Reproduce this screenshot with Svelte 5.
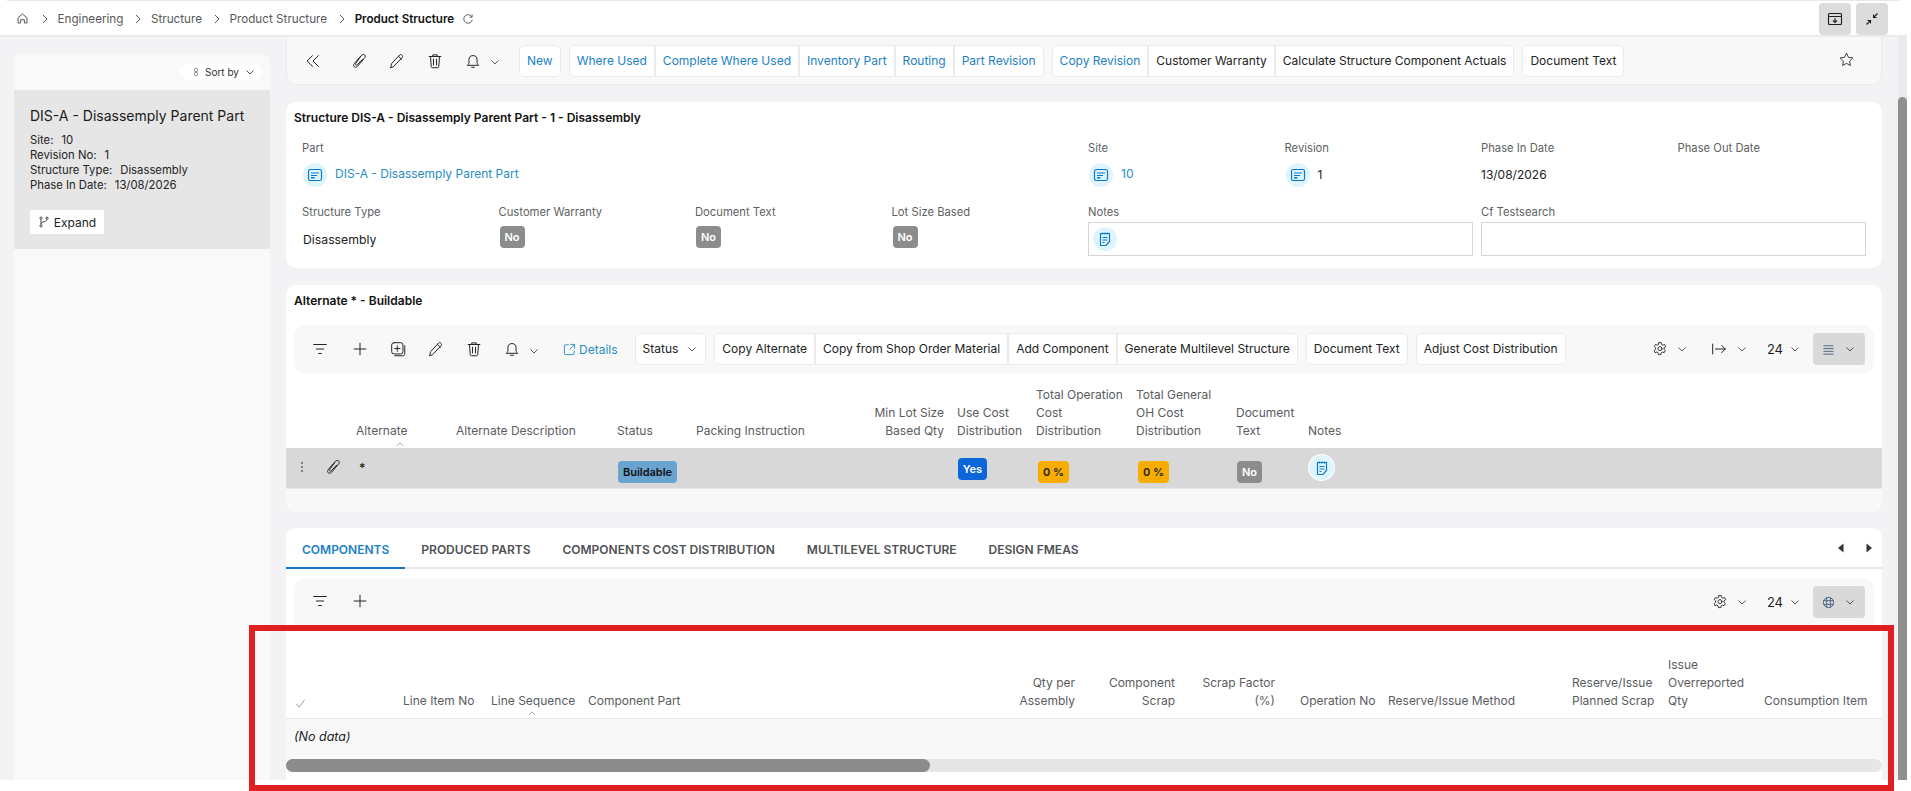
<script>
	const crumbs = ['Engineering', 'Structure', 'Product Structure'];
	const summary = [
		['Site:', '10'],
		['Revision No:', '1'],
		['Structure Type:', 'Disassembly'],
		['Phase In Date:', '13/08/2026']
	];
	const tabs = ['COMPONENTS', 'PRODUCED PARTS', 'COMPONENTS COST DISTRIBUTION', 'MULTILEVEL STRUCTURE', 'DESIGN FMEAS'];
	const altCols = [
		{ lines: [] },
		{ lines: ['Alternate'], sorted: true },
		{ lines: ['Alternate Description'] },
		{ lines: ['Status'] },
		{ lines: ['Packing Instruction'] },
		{ lines: ['Min Lot Size', 'Based Qty'], right: true },
		{ lines: ['Use Cost', 'Distribution'] },
		{ lines: ['Total Operation', 'Cost', 'Distribution'] },
		{ lines: ['Total General', 'OH Cost', 'Distribution'] },
		{ lines: ['Document', 'Text'] },
		{ lines: ['Notes'] }
	];
	const compCols = [
		{ lines: [], check: true },
		{ lines: ['Line Item No'] },
		{ lines: ['Line Sequence'], sorted: true },
		{ lines: ['Component Part'] },
		{ lines: ['Qty per', 'Assembly'], right: true },
		{ lines: ['Component', 'Scrap'], right: true },
		{ lines: ['Scrap Factor', '(%)'], right: true },
		{ lines: ['Operation No'], far: true },
		{ lines: ['Reserve/Issue Method'] },
		{ lines: ['Reserve/Issue', 'Planned Scrap'] },
		{ lines: ['Issue', 'Overreported', 'Qty'] },
		{ lines: ['Consumption Item'] }
	];
</script>

{#snippet chev()}
	<svg class="chev" viewBox="0 0 12 12"><path d="M2.5 4.5 6 8l3.5-3.5" /></svg>
{/snippet}
{#snippet clip()}
	<svg class="ic" viewBox="0 0 20 20"><path d="M12 4.500 5 12.500c-1.400 1.600-1.200 3.200-.2 4s2.500.6 3.700-.8L16 7c1.200-1.500 1.200-3 .2-3.800s-2.500-.6-3.500.6L6.500 12.500c-.6.8-.5 1.500 0 1.900s1.200.3 1.800-.4L14 8" /></svg>
{/snippet}
{#snippet pencil()}
	<svg class="ic" viewBox="0 0 20 20"><path d="M3 17.200l.9-4.200 9-9.600c.7-.7 1.700-.7 2.300-.1l.6.6c.6.6.6 1.600-.1 2.300l-9 9.600zM11.600 4.800l3.300 3.200" /></svg>
{/snippet}
{#snippet trash()}
	<svg class="ic" viewBox="0 0 20 20"><path d="M3.500 5h13M7.500 5V3.200h5V5M5 5l.8 11.200c.1.900.7 1.300 1.400 1.300h5.600c.7 0 1.300-.4 1.400-1.300L15 5M8.300 8v6.500M11.700 8v6.500" /></svg>
{/snippet}
{#snippet bell()}
	<svg class="ic" viewBox="0 0 20 20"><path d="M4 14.500c1-1 1.500-1.800 1.500-3.500V8.500a4.500 4.500 0 0 1 9 0V11c0 1.700.5 2.500 1.500 3.500zM8.500 17h3" /></svg>
{/snippet}
{#snippet filter()}
	<svg class="ic" viewBox="0 0 20 20"><path d="M3 5h14M6 10h8M8.500 15h3" /></svg>
{/snippet}
{#snippet plus()}
	<svg class="ic" viewBox="0 0 20 20"><path d="M10 3.500v13M3.500 10h13" /></svg>
{/snippet}
{#snippet gear()}
	<svg class="ic" viewBox="0 0 20 20"><path d="M8.500 2h3l.4 2.200 1.700 1 2.100-.8 1.500 2.600L15 8.500v2l1.700 1.500-1.500 2.600-2.100-.8-1.700 1-.4 2.200h-3l-.4-2.200-1.700-1-2.100.8L2.800 12 4.500 10.500v-2L2.800 7l1.500-2.600 2.100.8 1.700-1z" /><circle cx="10" cy="9.500" r="2.500" /></svg>
{/snippet}
{#snippet lookup()}
	<span class="bubble">
		<svg viewBox="0 0 16 16"><rect x="1.500" y="2.500" width="13" height="11" rx="1.800" /><path d="M4 6h8M4 8.500h6" /><rect class="solid" x="4" y="10" width="3.500" height="1.500" /></svg>
	</span>
{/snippet}
{#snippet notes()}
	<span class="bubble">
		<svg viewBox="0 0 16 16"><path d="M3.500 2.500h9v8l-3.500 4h-5.500zM5.500 1.500v2M8 1.500v2M10.500 1.500v2M5.500 6.500h5M5.500 9h5M5.500 11.500h2" /></svg>
	</span>
{/snippet}
{#snippet no()}
	<span class="badge grey">No</span>
{/snippet}

<div class="page">
	<div class="frame">
		<header class="top">
			<svg class="home" viewBox="0 0 16 16"><path d="M2.500 7 8 2.500 13.500 7v6.500h-3.200V9.500H5.700v4H2.500z" /></svg>
			{#each crumbs as c}
				<svg class="sep" viewBox="0 0 8 10"><path d="M2 1l4 4-4 4" /></svg>
				<span class="crumb">{c}</span>
			{/each}
			<svg class="sep" viewBox="0 0 8 10"><path d="M2 1l4 4-4 4" /></svg>
			<strong class="crumb current">Product Structure</strong>
			<svg class="refresh" viewBox="0 0 14 14"><path d="M11.500 4.500A5 5 0 1 0 12 8M11.800 1.800v3h-3" /></svg>
			<div class="top-actions">
				<button class="top-btn" aria-label="Save view">
					<svg viewBox="0 0 16 16"><rect x="1.500" y="2.500" width="13" height="11" rx="1" /><path d="M1.500 5.500h13M8 7v4M6 9.500l2 2 2-2" /></svg>
				</button>
				<button class="top-btn" aria-label="Collapse">
					<svg viewBox="0 0 16 16"><path d="M2.500 13.500 6.500 9.500M3.500 9.500h3v3M13.500 2.500l-4 4M12.500 6.500h-3v-3" /></svg>
				</button>
			</div>
		</header>

		<div class="body">
			<aside class="side">
				<div class="side-top">
					<span class="sort">
						<svg viewBox="0 0 10 14"><circle cx="5" cy="4.500" r="2.200" /><circle cx="5" cy="9.500" r="2.200" /></svg>
						Sort by
						{@render chev()}
					</span>
				</div>
				<div class="side-item">
					<h2>DIS-A - Disassemply Parent Part</h2>
					<dl>
						{#each summary as [k, v]}
							<div><dt>{k}</dt><dd>{v}</dd></div>
						{/each}
					</dl>
					<button class="expand">
						<svg viewBox="0 0 14 14"><circle cx="3.500" cy="2.500" r="1.300" /><circle cx="10.500" cy="2.500" r="1.300" /><circle cx="3.500" cy="11.500" r="1.300" /><path d="M3.500 4v6M10.500 4c0 3-7 2.500-7 5" /></svg>
						Expand
					</button>
				</div>
			</aside>

			<main class="main">
				<div class="bar top-bar">
					<span class="icon first">
						<svg class="ic" viewBox="0 0 20 20"><path d="M9.500 4l-6 6 6 6M16 4l-6 6 6 6" /></svg>
					</span>
					<span class="icon gap8">{@render clip()}</span>
					<span class="icon">{@render pencil()}</span>
					<span class="icon">{@render trash()}</span>
					<span class="icon">{@render bell()}</span>
					<span class="bell-chev">{@render chev()}</span>
					<div class="group new"><button class="link">New</button></div>
					<div class="group">
						<button class="link">Where Used</button>
						<button class="link">Complete Where Used</button>
						<button class="link">Inventory Part</button>
						<button class="link">Routing</button>
						<button class="link">Part Revision</button>
					</div>
					<div class="group">
						<button class="link">Copy Revision</button>
						<button>Customer Warranty</button>
						<button>Calculate Structure Component Actuals</button>
					</div>
					<div class="group"><button>Document Text</button></div>
					<svg class="star" viewBox="0 0 20 20"><path d="M10 2.500l2.300 4.900 5.200.7-3.800 3.700.9 5.300L10 14.500l-4.600 2.600.9-5.300L2.500 8.100l5.200-.7z" /></svg>
				</div>

				<section class="card form">
					<h3>Structure DIS-A - Disassemply Parent Part - 1 - Disassembly</h3>
					<div class="fields">
						<div class="field span4">
							<span class="label">Part</span>
							<span class="value top-row">{@render lookup()}<a href="#part">DIS-A - Disassemply Parent Part</a></span>
						</div>
						<div class="field">
							<span class="label">Site</span>
							<span class="value top-row">{@render lookup()}<a href="#site">10</a></span>
						</div>
						<div class="field">
							<span class="label">Revision</span>
							<span class="value top-row">{@render lookup()}<span>1</span></span>
						</div>
						<div class="field">
							<span class="label">Phase In Date</span>
							<span class="value top-row">13/08/2026</span>
						</div>
						<div class="field">
							<span class="label">Phase Out Date</span>
						</div>
						<div class="field">
							<span class="label">Structure Type</span>
							<span class="value low plain">Disassembly</span>
						</div>
						<div class="field">
							<span class="label">Customer Warranty</span>
							<span class="value low">{@render no()}</span>
						</div>
						<div class="field">
							<span class="label">Document Text</span>
							<span class="value low">{@render no()}</span>
						</div>
						<div class="field">
							<span class="label">Lot Size Based</span>
							<span class="value low">{@render no()}</span>
						</div>
						<div class="field span2">
							<span class="label">Notes</span>
							<span class="box">{@render notes()}</span>
						</div>
						<div class="field span2">
							<span class="label">Cf Testsearch</span>
							<span class="box"></span>
						</div>
					</div>
				</section>

				<section class="card alt">
					<h3>Alternate * - Buildable</h3>
					<div class="bar list-bar">
						<span class="icon">{@render filter()}</span>
						<span class="icon after-filter">{@render plus()}</span>
						<span class="icon">
							<svg class="ic" viewBox="0 0 20 20"><rect x="3" y="3" width="12.500" height="12.500" rx="2.500" /><path d="M9.200 6.500v6M6.200 9.500h6M17.500 6.500v9c0 1.300-.8 2-2 2H6.500" /></svg>
						</span>
						<span class="icon">{@render pencil()}</span>
						<span class="icon">{@render trash()}</span>
						<span class="icon">{@render bell()}</span>
						<span class="bell-chev">{@render chev()}</span>
						<a class="details" href="#details">
							<svg viewBox="0 0 14 14"><path d="M6 2H2.500C1.800 2 1.500 2.400 1.500 3v8.500c0 .6.300 1 1 1H11c.7 0 1-.4 1-1V8M8 1.500h4.500V6M12.500 1.500 7 7" /></svg>
							Details
						</a>
						<div class="group status"><button>Status {@render chev()}</button></div>
						<div class="group">
							<button>Copy Alternate</button>
							<button>Copy from Shop Order Material</button>
							<button>Add Component</button>
							<button>Generate Multilevel Structure</button>
						</div>
						<div class="group"><button>Document Text</button></div>
						<div class="group"><button>Adjust Cost Distribution</button></div>
						<div class="tools">
							<span class="tool wide">{@render gear()}{@render chev()}</span>
							<span class="tool arrow">
								<svg class="ic" viewBox="0 0 20 20"><path d="M3 4.500v11M6 10h11M13 6l4 4-4 4" /></svg>
								{@render chev()}
							</span>
							<span class="tool count">24{@render chev()}</span>
							<span class="view">
								<svg viewBox="0 0 14 14"><path d="M1.500 3h11M1.500 6h11M1.500 9h11M1.500 12h11" /></svg>
								{@render chev()}
							</span>
						</div>
					</div>

					<div class="thead alt-grid">
						{#each altCols as col}
							<div class="th" class:right={col.right}>
								{#each col.lines as line}<span>{line}</span>{/each}
								{#if col.sorted}<svg class="caret alt-caret" viewBox="0 0 10 6"><path d="M1 5l4-4 4 4" /></svg>{/if}
							</div>
						{/each}
					</div>
					<div class="row alt-grid">
						<div class="lead">
							<svg class="dots" viewBox="0 0 4 12"><circle cx="2" cy="2" r="1" /><circle cx="2" cy="6" r="1" /><circle cx="2" cy="10" r="1" /></svg>
							{@render clip()}
						</div>
						<div class="td"><span class="star-val">*</span></div>
						<div class="td"></div>
						<div class="td"><span class="badge blue">Buildable</span></div>
						<div class="td"></div>
						<div class="td"></div>
						<div class="td"><span class="badge yes">Yes</span></div>
						<div class="td"><span class="badge amber">0 %</span></div>
						<div class="td"><span class="badge amber">0 %</span></div>
						<div class="td"><span class="badge grey">No</span></div>
						<div class="td">{@render notes()}</div>
					</div>
					<div class="tfoot"></div>
				</section>

				<section class="card comps">
					<nav class="tabs">
						{#each tabs as tab, i}
							<span class="tab" class:active={i === 0}>{tab}</span>
						{/each}
						<span class="arrows">
							<svg viewBox="0 0 8 10"><path d="M6.500 0.500v9L1 5z" /></svg>
							<svg viewBox="0 0 8 10"><path d="M1.500 0.500v9L7 5z" /></svg>
						</span>
					</nav>
					<div class="bar list-bar comp-bar">
						<span class="icon">{@render filter()}</span>
						<span class="icon after-filter">{@render plus()}</span>
						<div class="tools">
							<span class="tool">{@render gear()}{@render chev()}</span>
							<span class="tool count">24{@render chev()}</span>
							<span class="view">
								<svg viewBox="0 0 14 14"><circle cx="7" cy="7" r="5.500" /><path d="M1.500 5h11M1.500 9h11M5 1.500v11M9 1.500v11" /></svg>
								{@render chev()}
							</span>
						</div>
					</div>
					<div class="thead comp-grid">
						{#each compCols as col}
							<div class="th" class:right={col.right} class:far={col.far}>
								{#if col.check}
									<svg class="check" viewBox="0 0 12 12"><path d="M1.500 6.500 4.500 10 10.500 2" /></svg>
								{/if}
								{#each col.lines as line}<span>{line}</span>{/each}
								{#if col.sorted}<svg class="caret comp-caret" viewBox="0 0 10 6"><path d="M1 5l4-4 4 4" /></svg>{/if}
							</div>
						{/each}
					</div>
					<div class="empty">(No data)</div>
					<div class="hscroll"><div class="hthumb"></div></div>
				</section>
			</main>

			<div class="vscroll"><div class="vthumb"></div></div>
		</div>
	</div>
	<div class="callout"></div>
</div>

<style>
	:global(body) {
		margin: 0;
		background: #fff;
	}
	.page {
		position: relative;
		width: 1911px;
		height: 791px;
		overflow: hidden;
		font-family: Inter, 'Noto Sans', sans-serif;
		font-size: 12px;
		color: #1f1f22;
	}
	.frame {
		width: 1907px;
		height: 780px;
		display: flex;
		flex-direction: column;
		overflow: hidden;
		background: #f3f3f5;
		border-radius: 10px 10px 0 0;
	}
	.top {
		flex: none;
		height: 37px;
		box-sizing: border-box;
		display: flex;
		align-items: center;
		background: #fff;
		border-top: 1px solid #e8e8ea;
		border-bottom: 2px solid #ebebed;
		padding: 1px 0 0 16px;
	}
	.home {
		width: 13px;
		height: 13px;
		margin-right: 1px;
		fill: none;
		stroke: #444;
		stroke-width: 1.1;
	}
	.sep {
		width: 8px;
		height: 10px;
		margin: 0 9px 0 10.500px;
		fill: none;
		stroke: #555;
		stroke-width: 1;
	}
	.crumb {
		color: #58595c;
		font-size: 11.700px;
	}
	.current {
		color: #111;
		font-weight: 600;
		font-size: 11.600px;
	}
	.refresh {
		width: 12px;
		height: 12px;
		margin-left: 8px;
		fill: none;
		stroke: #555;
		stroke-width: 1.1;
	}
	.top-actions {
		margin-left: auto;
		margin-right: 19px;
		display: flex;
		gap: 5px;
	}
	.top-btn {
		width: 32px;
		height: 32px;
		padding: 0;
		border: 0;
		border-radius: 4px;
		background: #dcdcdd;
		display: flex;
		align-items: center;
		justify-content: center;
	}
	.top-btn svg {
		width: 16px;
		height: 16px;
		fill: none;
		stroke: #1c1c1c;
		stroke-width: 1.1;
	}
	.body {
		flex: 1;
		min-height: 0;
		display: flex;
	}
	.side {
		flex: none;
		width: 256px;
		margin: 17px 16px 0 14px;
		background: #f9f9f9;
		border-radius: 8px 8px 0 0;
		overflow: hidden;
	}
	.side-top {
		height: 36px;
		box-sizing: border-box;
		padding: 10px 9px 0 0;
		display: flex;
		justify-content: flex-end;
	}
	.sort {
		width: 81px;
		height: 16px;
		box-sizing: border-box;
		border-radius: 8px;
		background: #fff;
		padding-left: 7px;
		display: flex;
		align-items: center;
		justify-content: center;
		gap: 5px;
		font-size: 10px;
		color: #333;
	}
	.sort svg:first-child {
		width: 8px;
		height: 12px;
		fill: none;
		stroke: #666;
		stroke-width: 0.9;
	}
	.side-item {
		height: 159px;
		box-sizing: border-box;
		background: #e6e6e6;
		padding: 17px 16px 0;
	}
	h2 {
		margin: 0 0 8px;
		font-size: 14px;
		line-height: 18px;
		font-weight: 400;
		color: #1a1a1a;
		white-space: nowrap;
	}
	dl {
		margin: 0;
		font-size: 11.300px;
		line-height: 15px;
		color: #222;
	}
	dl div {
		display: flex;
		gap: 8px;
	}
	dd {
		margin: 0;
	}
	.expand {
		margin-top: 17px;
		width: 74px;
		height: 24px;
		padding: 0;
		border: 0;
		background: #fff;
		display: flex;
		align-items: center;
		justify-content: center;
		gap: 4px;
		font: 12px Inter, sans-serif;
		color: #222;
	}
	.expand svg {
		width: 12px;
		height: 12px;
		fill: none;
		stroke: #333;
		stroke-width: 1;
	}
	.main {
		flex: none;
		width: 1596px;
		min-height: 0;
		display: flex;
		flex-direction: column;
		gap: 17px;
	}
	.bar {
		display: flex;
		align-items: center;
		background: #f8f8f9;
	}
	.top-bar {
		flex: none;
		height: 48px;
		box-sizing: border-box;
		border: 1px solid #ebebed;
		border-top: 0;
		border-radius: 0 0 10px 10px;
		padding-left: 7px;
	}
	.icon {
		flex: none;
		width: 38px;
		height: 30px;
		display: flex;
		align-items: center;
		justify-content: center;
	}
	.gap8 {
		margin-left: 8px;
	}
	.after-filter {
		margin-left: 2px;
	}
	.ic {
		width: 18px;
		height: 18px;
		fill: none;
		stroke: #222;
		stroke-width: 1.1;
		stroke-linecap: round;
		stroke-linejoin: round;
	}
	.chev {
		width: 12px;
		height: 12px;
		fill: none;
		stroke: #444;
		stroke-width: 0.9;
	}
	.bell-chev {
		display: flex;
		margin-left: -3px;
		margin-top: 3px;
	}
	.group {
		display: flex;
		flex: none;
		height: 32px;
		box-sizing: border-box;
		margin-left: 8px;
		background: #fff;
		border: 1px solid #ebebed;
		border-radius: 5px;
	}
	.group button {
		border: 0;
		border-left: 2px solid #ebebed;
		background: none;
		padding: 0 7px;
		font: 12px Inter, sans-serif;
		color: #222;
		white-space: nowrap;
	}
	.group button:first-child {
		border-left: 0;
	}
	.group .link {
		color: #1d7fc5;
	}
	.new {
		margin-left: 18px;
	}
	.star {
		width: 17px;
		height: 17px;
		margin-left: auto;
		margin-right: 26px;
		margin-top: -3px;
		fill: none;
		stroke: #333;
		stroke-width: 1.1;
	}
	.card {
		flex: none;
		background: #fff;
		border-radius: 10px;
		overflow: hidden;
	}
	h3 {
		margin: 0;
		font-size: 12px;
		line-height: 16px;
		font-weight: 600;
		color: #111;
	}
	.form {
		height: 166px;
		box-sizing: border-box;
		padding: 8px 16px 0 8px;
	}
	.fields {
		margin: 15px 0 0 8px;
		display: grid;
		grid-template-columns: repeat(8, 1fr);
		column-gap: 8px;
		row-gap: 19px;
	}
	.span4 {
		grid-column: span 4;
	}
	.span2 {
		grid-column: span 2;
	}
	.field {
		display: flex;
		flex-direction: column;
		min-width: 0;
	}
	.label {
		font-size: 11.250px;
		line-height: 14px;
		color: #5e5f62;
	}
	.value {
		margin-top: 8px;
		height: 24px;
		display: flex;
		align-items: center;
		gap: 8px;
		font-size: 12px;
		color: #222;
	}
	.value.top-row {
		height: 23px;
	}
	.value.low {
		margin-top: 7px;
		height: 22px;
	}
	.plain {
		padding: 2px 0 0 1px;
		font-size: 12.250px;
	}
	.value a {
		color: #2a8dbf;
		text-decoration: none;
		margin-top: -2px;
	}
	.box {
		margin-top: 3px;
		height: 34px;
		box-sizing: border-box;
		border: 1px solid #d5d5d7;
		display: flex;
		align-items: center;
		padding-left: 3px;
	}
	.bubble {
		flex: none;
		width: 24px;
		height: 24px;
		margin-left: 1px;
		border-radius: 50%;
		background: #dff5fd;
		display: flex;
		align-items: center;
		justify-content: center;
	}
	.bubble svg {
		width: 16px;
		height: 16px;
		fill: none;
		stroke: #0b78cf;
		stroke-width: 1.2;
	}
	.bubble .solid {
		fill: #0b78cf;
		stroke: none;
	}
	.badge {
		display: inline-flex;
		align-items: center;
		justify-content: center;
		height: 22px;
		box-sizing: border-box;
		border-radius: 4px;
		font-size: 11px;
		font-weight: 600;
	}
	.grey {
		width: 25px;
		background: #8c8c8c;
		color: #fff;
		margin-left: 1px;
	}
	.blue {
		width: 59px;
		background: #69a3cf;
		color: #111;
		margin-left: 1px;
	}
	.yes {
		width: 29px;
		background: #0b66d9;
		color: #fff;
		margin: 2px 0 0 1px;
	}
	.amber {
		width: 31px;
		background: #f6ac00;
		color: #222;
		margin-left: 2px;
	}
	.td .blue,
	.td .amber,
	.td .grey {
		margin-top: 7px;
	}
	.alt {
		height: 227px;
	}
	.alt h3 {
		padding: 8px 8px 0;
	}
	.list-bar {
		height: 48px;
		margin: 16px 8px 0;
		padding-left: 7px;
		border-radius: 10px;
	}
	.list-bar .group {
		margin-left: 8px;
	}
	.list-bar .group button {
		padding-bottom: 1px;
	}
	.details {
		margin-left: 23px;
		display: flex;
		align-items: center;
		gap: 3px;
		color: #2a8dbf;
		text-decoration: none;
		font-size: 12px;
	}
	.details svg {
		width: 13px;
		height: 13px;
		fill: none;
		stroke: #2a8dbf;
		stroke-width: 1;
	}
	.list-bar .status {
		margin-left: 17px;
	}
	.status button {
		display: flex;
		align-items: center;
		gap: 8px;
	}
	.tools {
		margin-left: auto;
		margin-right: 9px;
		display: flex;
		align-items: center;
	}
	.tool {
		display: flex;
		align-items: center;
		gap: 8px;
		margin-right: 19px;
		font-size: 13px;
	}
	.tool .ic {
		width: 16px;
		height: 16px;
	}
	.tool.arrow .ic {
		width: 18px;
		height: 18px;
	}
	.wide {
		margin-right: 22px;
	}
	.count {
		gap: 6px;
		margin-right: 12px;
	}
	.view {
		width: 52px;
		height: 32px;
		border-radius: 4px;
		background: #d9d9da;
		display: flex;
		align-items: center;
		justify-content: center;
		gap: 9px;
	}
	.view svg:first-child {
		width: 13px;
		height: 13px;
		fill: none;
		stroke: #46627f;
		stroke-width: 1;
	}
	.thead {
		display: grid;
		background: #fff;
		align-items: end;
		box-sizing: border-box;
	}
	.alt-grid {
		grid-template-columns: 62px 100px 161px 79px 152px 109px 79px 100px 100px 72px 1fr;
	}
	.alt .thead {
		height: 75px;
		padding-bottom: 8px;
	}
	.th {
		position: relative;
		display: flex;
		flex-direction: column;
		padding: 0 0 0 8px;
		font-size: 12px;
		line-height: 18px;
		color: #5b5c60;
		white-space: nowrap;
	}
	.right {
		align-items: flex-end;
		padding: 0 5px 0 0;
	}
	.far {
		padding-left: 20px;
	}
	.caret {
		position: absolute;
		width: 8px;
		height: 5px;
		fill: none;
		stroke: #777;
		stroke-width: 0.8;
	}
	.alt-caret {
		left: 48px;
		top: 20px;
	}
	.comp-caret {
		left: 45px;
		top: 19px;
	}
	.row {
		display: grid;
		height: 41px;
		box-sizing: border-box;
		background: #d8d8d9;
		border-bottom: 1px solid #e8e8e8;
		align-items: center;
	}
	.lead {
		display: flex;
		align-items: center;
		padding-left: 14px;
	}
	.lead .ic {
		margin-left: 20px;
		margin-top: -2px;
		width: 18px;
		height: 18px;
	}
	.dots {
		width: 4px;
		height: 12px;
		fill: #666;
		margin-top: -2px;
	}
	.td {
		padding-left: 8px;
		display: flex;
		align-items: center;
	}
	.td .bubble {
		width: 25px;
		height: 25px;
		margin-top: -1px;
		box-shadow: 0 0 0 1px #fff;
	}
	.star-val {
		margin-top: -1px;
		font-size: 12px;
		font-weight: 600;
		margin-left: 3px;
	}
	.tfoot {
		height: 23px;
		background: #f8f8f9;
	}
	.comps {
		height: 270px;
		margin-top: -1px;
	}
	.tabs {
		height: 41px;
		box-sizing: border-box;
		display: flex;
		border-bottom: 2px solid #e9e9eb;
	}
	.tab {
		padding: 2px 16px 0;
		height: 41px;
		box-sizing: border-box;
		display: flex;
		align-items: center;
		font-size: 12px;
		font-weight: 600;
		color: #505154;
		white-space: nowrap;
	}
	.active {
		padding-top: 4px;
		color: #1d7fc5;
		border-bottom: 2px solid #0f75c3;
	}
	.arrows {
		margin-left: auto;
		margin-right: 9px;
		display: flex;
		align-items: center;
		gap: 20px;
	}
	.arrows svg {
		width: 8px;
		height: 10px;
		fill: #333;
	}
	.comp-bar {
		margin-top: 9px;
		border-radius: 10px 10px 0 0;
	}
	.comp-bar .icon {
		margin-top: -2px;
	}
	.comp-grid {
		grid-template-columns: 109px 88px 97px 415px 85px 100px 100px 100px 184px 96px 96px 1fr;
	}
	.comps .thead {
		height: 93px;
		padding-bottom: 8px;
		border-bottom: 1px solid #e6e6e8;
	}
	.check {
		width: 11px;
		height: 11px;
		margin: 0 0 1px 1px;
		fill: none;
		stroke: #777;
		stroke-width: 0.8;
	}
	.empty {
		height: 40px;
		box-sizing: border-box;
		padding: 10px 0 0 8px;
		background: #f8f8f9;
		font-size: 12.500px;
		font-style: italic;
		color: #222;
	}
	.hscroll {
		height: 13px;
		background: #e6e6e7;
		border-radius: 7px;
	}
	.hthumb {
		width: 644px;
		height: 13px;
		background: #8c8c8c;
		border-radius: 7px;
	}
	.vscroll {
		margin-left: 16px;
		width: 9px;
		background: #ebebed;
	}
	.vthumb {
		height: 100%;
		margin-top: 60px;
		background: #8f8f8f;
		border-radius: 5px 5px 0 0;
	}
	.callout {
		position: absolute;
		left: 249px;
		top: 625px;
		width: 1645px;
		height: 166px;
		box-sizing: border-box;
		border: 6px solid #e02020;
		pointer-events: none;
	}
</style>
